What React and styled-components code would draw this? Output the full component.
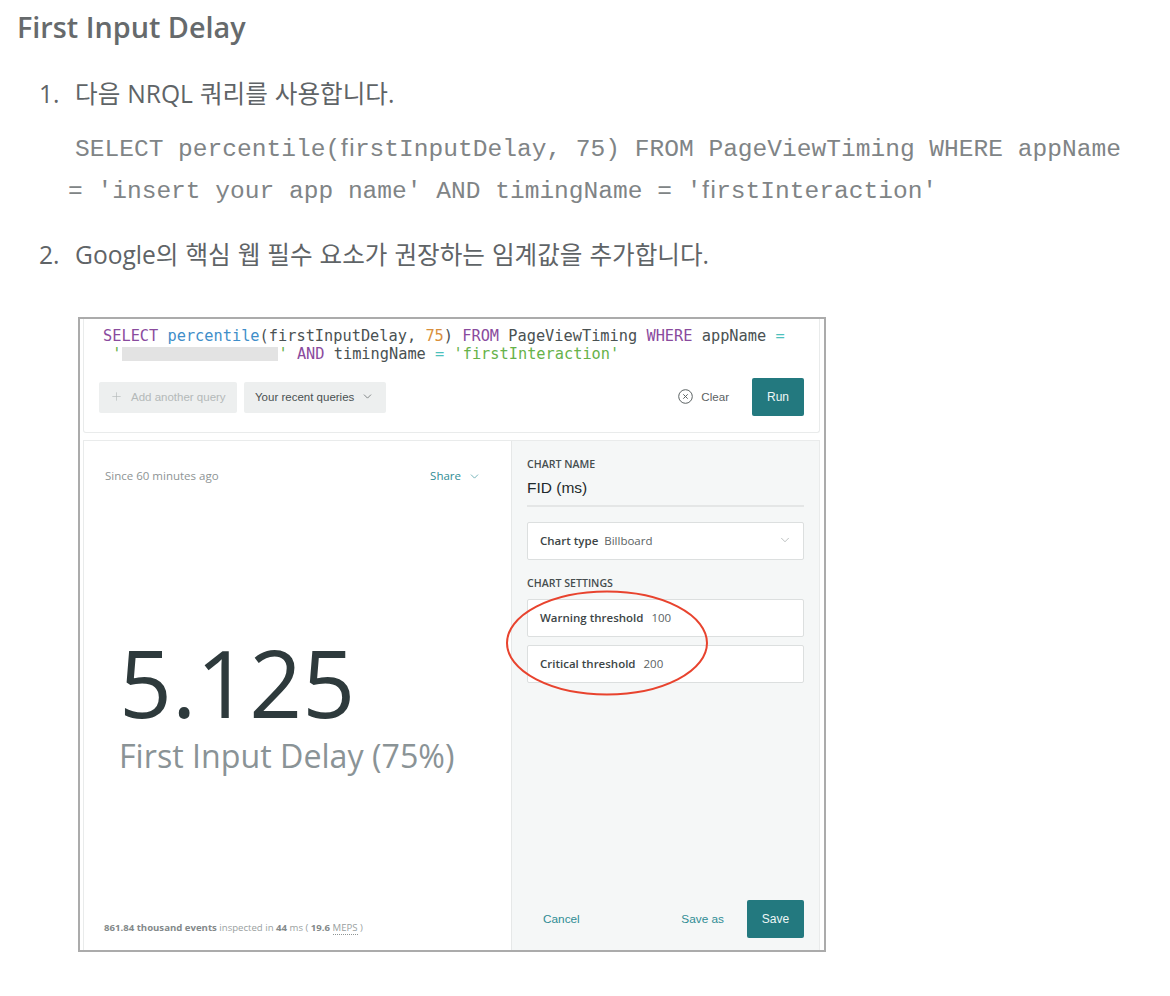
import styled, { createGlobalStyle } from 'styled-components';
import { ChevronDown, Plus } from 'lucide-react';

const Global = createGlobalStyle`
  body {
    margin: 0;
    background: #fff;
    font-family: "Open Sans", "Noto Sans CJK KR", sans-serif;
  }
`;

const Page = styled.div`
  width: 1170px;
  height: 996px;
  overflow: hidden;
  padding: 8px 0 0 17px;
  box-sizing: border-box;
`;

const Heading = styled.h2`
  margin: 0;
  font-size: 28.8px;
  line-height: 38px;
  font-weight: 600;
  color: #666a6c;
`;

const Steps = styled.div`
  margin: 31px 0 0 22px;
`;

const Step = styled.div`
  display: flex;
  font-size: 24.6px;
  line-height: 34px;
  word-spacing: 0.6px;
  color: #5f6467;
`;

const StepNumber = styled.span`
  width: 36px;
  flex: none;
`;

const CodeText = styled.div`
  margin: 18px 0 25px 29px;
  font-family: "Liberation Mono", monospace;
  font-size: 24.55px;
  line-height: 42px;
  color: #808486;
  white-space: pre;
  text-indent: 7px;
`;

const Frame = styled.div`
  position: relative;
  width: 748px;
  height: 635px;
  margin: 45px 0 0 39px;
  box-sizing: border-box;
  border: 2px solid #ababab;
  padding: 0 4px 0 3px;
  display: flex;
  flex-direction: column;
  gap: 7px;
  background: #fff;
`;

const QueryCard = styled.div`
  height: 114px;
  box-sizing: border-box;
  flex: none;
  border: 1px solid #e9ebeb;
  border-top: none;
  border-radius: 0 0 3px 3px;
  padding: 8px 15px 0;
`;

const QueryText = styled.div`
  margin-left: 4px;
  font-family: "DejaVu Sans Mono", monospace;
  font-size: 15.3px;
  line-height: 18px;
  color: #4a5152;
  white-space: pre;
`;

const Token = styled.span`
  color: ${(p) => p.$color};
`;

const Redacted = styled.span`
  display: inline-block;
  width: 156px;
  height: 14px;
  margin-left: 1px;
  vertical-align: -2px;
  background: #e3e3e3;
`;

const QueryActions = styled.div`
  display: flex;
  align-items: center;
  margin-top: 15px;
  gap: 7px;
`;

const SoftButton = styled.div`
  height: 31px;
  width: ${(p) => p.$width}px;
  box-sizing: border-box;
  display: flex;
  align-items: center;
  gap: ${(p) => p.$gap}px;
  padding: 0 0 1px 11px;
  background: #edefef;
  border-radius: 2px;
  font-family: "Liberation Sans", sans-serif;
  font-size: 11.5px;
  color: ${(p) => p.$color};
`;

const ClearLink = styled.div`
  margin-left: auto;
  margin-right: 16px;
  padding-bottom: 1px;
  display: flex;
  align-items: center;
  gap: 8px;
  font-family: "Liberation Sans", sans-serif;
  font-size: 11.6px;
  color: #5b6263;
`;

const PrimaryButton = styled.div`
  width: ${(p) => p.$width}px;
  height: 38px;
  display: flex;
  align-items: center;
  justify-content: center;
  background: #23797f;
  border-radius: 2px;
  font-family: "Liberation Sans", sans-serif;
  font-size: 12px;
  color: #eef6f6;
`;

const ResultCard = styled.div`
  flex: 1;
  display: flex;
  border: 1px solid #e9ebeb;
  border-bottom: none;
`;

const ChartPane = styled.div`
  width: 428px;
  flex: none;
  box-sizing: border-box;
  border-right: 1px solid #e6e8e8;
  padding: 26px 20px 0 21px;
  display: flex;
  flex-direction: column;
`;

const PaneTop = styled.div`
  display: flex;
  align-items: center;
  justify-content: space-between;
  padding-right: 10px;
  font-size: 11.5px;
  line-height: 18px;
  color: #8e9494;
`;

const ShareLink = styled.div`
  display: flex;
  align-items: center;
  gap: 7px;
  color: #2f8c94;
`;

const BigValue = styled.div`
  margin: 145px 0 0 14px;
  font-size: 92.6px;
  line-height: 104px;
  color: #2e3a3c;
`;

const ValueLabel = styled.div`
  margin: 0 0 0 14px;
  font-size: 32.2px;
  line-height: 44px;
  color: #8a9396;
`;

const Stats = styled.div`
  margin: auto 0 14px -1px;
  font-size: 9.6px;
  line-height: 16px;
  color: #9a9f9f;
  b {
    font-weight: 700;
    color: #83898a;
  }
`;

const Meps = styled.span`
  border-bottom: 1px dotted #8e9494;
`;

const SettingsPane = styled.div`
  flex: 1;
  position: relative;
  background: #f5f7f7;
  padding: 15px 15px 12px;
  display: flex;
  flex-direction: column;
`;

const SectionLabel = styled.div`
  margin-top: ${(p) => p.$top || 0}px;
  font-size: 10.6px;
  line-height: 16px;
  font-weight: 600;
  color: #464e4f;
`;

const NameInput = styled.div`
  margin-top: 7px;
  padding-bottom: 8px;
  border-bottom: 2px solid #e4e6e6;
  font-family: "Liberation Sans", sans-serif;
  font-size: 15.5px;
  line-height: 18px;
  color: #1f2a2c;
`;

const Field = styled.div`
  height: 38px;
  box-sizing: border-box;
  display: flex;
  align-items: center;
  padding: 0 11px 2px 12px;
  margin-top: ${(p) => p.$top}px;
  background: #fff;
  border: 1px solid #dcdfdf;
  border-radius: 2px;
  font-size: 11.5px;
  color: #5b6263;
  b {
    font-weight: 600;
    color: #3c4546;
    margin-right: ${(p) => p.$gap}px;
  }
  svg {
    margin-left: auto;
  }
`;

const PaneFooter = styled.div`
  margin-top: auto;
  display: flex;
  align-items: center;
  justify-content: space-between;
  padding-left: 16px;
  font-family: "Liberation Sans", sans-serif;
  font-size: 11.8px;
  color: #2f8c94;
`;

const FooterActions = styled.div`
  display: flex;
  align-items: center;
  gap: 23px;
`;

const Ring = styled.svg`
  position: absolute;
  left: -7px;
  top: 148px;
  pointer-events: none;
`;

const Sql = () => (
  <QueryText>
    <Token $color="#8a4b9e">SELECT</Token> <Token $color="#3f8ec9">percentile</Token>(firstInputDelay,{' '}
    <Token $color="#d98f3c">75</Token>) <Token $color="#8a4b9e">FROM</Token> PageViewTiming{' '}
    <Token $color="#8a4b9e">WHERE</Token> appName <Token $color="#4dc1bd">=</Token>
    {'\n'} <Token $color="#66b24a">'</Token><Redacted /><Token $color="#66b24a">'</Token>{' '}
    <Token $color="#8a4b9e">AND</Token> timingName <Token $color="#4dc1bd">=</Token>{' '}
    <Token $color="#66b24a">'firstInteraction'</Token>
  </QueryText>
);

export default function App() {
  return (
    <Page>
      <Global />
      <Heading>First Input Delay</Heading>
      <Steps>
        <Step>
          <StepNumber>1.</StepNumber>
          <span>다음 NRQL 쿼리를 사용합니다.</span>
        </Step>
        <CodeText>
          {"SELECT percentile(ﬁrstInputDelay, 75) FROM PageViewTiming WHERE appName\n= 'insert your app name' AND timingName = 'ﬁrstInteraction'"}
        </CodeText>
        <Step>
          <StepNumber>2.</StepNumber>
          <span>Google의 핵심 웹 필수 요소가 권장하는 임계값을 추가합니다.</span>
        </Step>
        <Frame>
          <QueryCard>
            <Sql />
            <QueryActions>
              <SoftButton $width={138} $gap={8} $color="#b4b9b9">
                <Plus size={13} strokeWidth={1.2} />
                Add another query
              </SoftButton>
              <SoftButton $width={142} $gap={7} $color="#4a5152">
                Your recent queries
                <ChevronDown size={13} strokeWidth={1.2} />
              </SoftButton>
              <ClearLink>
                <svg width="15" height="15" viewBox="0 0 15 15" fill="none" stroke="#5b6263" strokeWidth="1">
                  <circle cx="7.5" cy="7.5" r="6.8" />
                  <path d="M5.3 5.3l4.4 4.4M9.7 5.3l-4.4 4.4" />
                </svg>
                Clear
              </ClearLink>
              <PrimaryButton $width={52}>Run</PrimaryButton>
            </QueryActions>
          </QueryCard>
          <ResultCard>
            <ChartPane>
              <PaneTop>
                <span>Since 60 minutes ago</span>
                <ShareLink>
                  Share
                  <ChevronDown size={13} strokeWidth={1.2} />
                </ShareLink>
              </PaneTop>
              <BigValue>5.125</BigValue>
              <ValueLabel>First Input Delay (75%)</ValueLabel>
              <Stats>
                <b>861.84 thousand events</b> inspected in <b>44</b> ms ( <b>19.6</b> <Meps>MEPS</Meps> )
              </Stats>
            </ChartPane>
            <SettingsPane>
              <SectionLabel>CHART NAME</SectionLabel>
              <NameInput>FID (ms)</NameInput>
              <Field $top={15} $gap={6}>
                <b>Chart type</b> Billboard
                <ChevronDown size={14} strokeWidth={1} color="#8e9494" />
              </Field>
              <SectionLabel $top={15}>CHART SETTINGS</SectionLabel>
              <Field $top={8} $gap={8}>
                <b>Warning threshold</b> 100
              </Field>
              <Field $top={8} $gap={8}>
                <b>Critical threshold</b> 200
              </Field>
              <PaneFooter>
                <span>Cancel</span>
                <FooterActions>
                  <span>Save as</span>
                  <PrimaryButton $width={57}>Save</PrimaryButton>
                </FooterActions>
              </PaneFooter>
              <Ring width="206" height="108" viewBox="0 0 206 108" fill="none">
                <ellipse cx="102" cy="54" rx="100" ry="51.5" stroke="#e8432e" strokeWidth="2" />
              </Ring>
            </SettingsPane>
          </ResultCard>
        </Frame>
      </Steps>
    </Page>
  );
}
